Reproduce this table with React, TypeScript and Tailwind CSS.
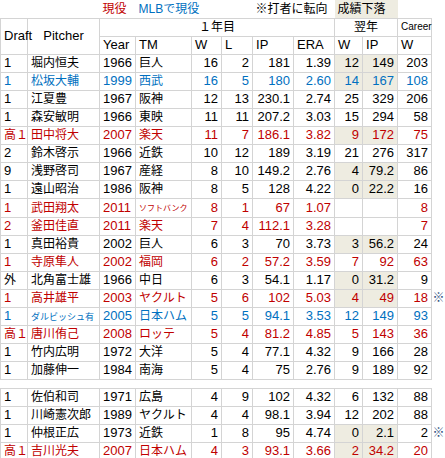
import React from 'react';

type Row = {
  d: string;
  n: string;
  y: string;
  tm: string;
  w: string;
  l: string;
  ip: string;
  era: string;
  w2: string;
  ip2: string;
  c: string;
  tone?: 'red' | 'blue';
  shade?: boolean;
  mark?: boolean;
  smallName?: boolean;
  smallTm?: boolean;
};

const top: Row[] = [
  { d: '1', n: '堀内恒夫', y: '1966', tm: '巨人', w: '16', l: '2', ip: '181', era: '1.39', w2: '12', ip2: '149', c: '203', shade: true },
  { d: '1', n: '松坂大輔', y: '1999', tm: '西武', w: '16', l: '5', ip: '180', era: '2.60', w2: '14', ip2: '167', c: '108', tone: 'blue', shade: true },
  { d: '1', n: '江夏豊', y: '1967', tm: '阪神', w: '12', l: '13', ip: '230.1', era: '2.74', w2: '25', ip2: '329', c: '206' },
  { d: '1', n: '森安敏明', y: '1966', tm: '東映', w: '11', l: '11', ip: '207.2', era: '3.03', w2: '15', ip2: '294', c: '58' },
  { d: '高１', n: '田中将大', y: '2007', tm: '楽天', w: '11', l: '7', ip: '186.1', era: '3.82', w2: '9', ip2: '172', c: '75', tone: 'red', shade: true },
  { d: '2', n: '鈴木啓示', y: '1966', tm: '近鉄', w: '10', l: '12', ip: '189', era: '3.19', w2: '21', ip2: '276', c: '317' },
  { d: '9', n: '浅野啓司', y: '1967', tm: '産経', w: '8', l: '10', ip: '149.2', era: '2.76', w2: '4', ip2: '79.2', c: '86', shade: true },
  { d: '1', n: '遠山昭治', y: '1986', tm: '阪神', w: '8', l: '5', ip: '128', era: '4.22', w2: '0', ip2: '22.2', c: '16', shade: true },
  { d: '1', n: '武田翔太', y: '2011', tm: 'ソフトバンク', w: '8', l: '1', ip: '67', era: '1.07', w2: '', ip2: '', c: '8', tone: 'red', smallTm: true },
  { d: '2', n: '釜田佳直', y: '2011', tm: '楽天', w: '7', l: '4', ip: '112.1', era: '3.28', w2: '', ip2: '', c: '7', tone: 'red' },
  { d: '1', n: '真田裕貴', y: '2002', tm: '巨人', w: '6', l: '3', ip: '70', era: '3.73', w2: '3', ip2: '56.2', c: '24', shade: true },
  { d: '1', n: '寺原隼人', y: '2002', tm: '福岡', w: '6', l: '2', ip: '57.2', era: '3.59', w2: '7', ip2: '92', c: '63', tone: 'red' },
  { d: '外', n: '北角富士雄', y: '1966', tm: '中日', w: '6', l: '3', ip: '54.1', era: '1.17', w2: '0', ip2: '31.2', c: '9', shade: true },
  { d: '1', n: '高井雄平', y: '2003', tm: 'ヤクルト', w: '5', l: '6', ip: '102', era: '5.03', w2: '4', ip2: '49', c: '18', tone: 'red', shade: true, mark: true },
  { d: '1', n: 'ダルビッシュ有', y: '2005', tm: '日本ハム', w: '5', l: '5', ip: '94.1', era: '3.53', w2: '12', ip2: '149', c: '93', tone: 'blue', smallName: true },
  { d: '高１', n: '唐川侑己', y: '2008', tm: 'ロッテ', w: '5', l: '4', ip: '81.2', era: '4.85', w2: '5', ip2: '143', c: '36', tone: 'red' },
  { d: '1', n: '竹内広明', y: '1972', tm: '大洋', w: '5', l: '4', ip: '77.1', era: '4.32', w2: '9', ip2: '166', c: '28' },
  { d: '1', n: '加藤伸一', y: '1984', tm: '南海', w: '5', l: '4', ip: '75', era: '2.76', w2: '9', ip2: '189', c: '92' },
];

const bottom: Row[] = [
  { d: '1', n: '佐伯和司', y: '1971', tm: '広島', w: '4', l: '9', ip: '102', era: '4.32', w2: '6', ip2: '132', c: '88' },
  { d: '1', n: '川崎憲次郎', y: '1989', tm: 'ヤクルト', w: '4', l: '4', ip: '98.1', era: '3.94', w2: '12', ip2: '202', c: '88' },
  { d: '1', n: '仲根正広', y: '1973', tm: '近鉄', w: '1', l: '8', ip: '95', era: '4.74', w2: '0', ip2: '2.1', c: '2', shade: true, mark: true },
  { d: '高１', n: '吉川光夫', y: '2007', tm: '日本ハム', w: '4', l: '3', ip: '93.1', era: '3.66', w2: '2', ip2: '34.2', c: '20', tone: 'red', shade: true },
];

const cell = 'border border-[#d4d4d4] h-[18px] p-0 px-[3px] whitespace-nowrap';
const num = `${cell} text-right`;
const jp = 'text-[12px]';

const Cols = () => (
  <colgroup>
    <col className="w-[27px]" />
    <col className="w-[72px]" />
    <col className="w-[36px]" />
    <col className="w-[56px]" />
    <col className="w-[30px]" />
    <col className="w-[31px]" />
    <col className="w-[41px]" />
    <col className="w-[41px]" />
    <col className="w-[28px]" />
    <col className="w-[35px]" />
    <col className="w-[34px]" />
    <col className="w-[14px]" />
  </colgroup>
);

const DataRow = ({ r }: { r: Row }) => {
  const tone = r.tone === 'red' ? 'text-[#c00000]' : r.tone === 'blue' ? 'text-[#0070c0]' : 'text-black';
  const sh = r.shade ? 'bg-[#eeece1]' : '';
  return (
    <tr className={tone}>
      <td className={cell}><span className={r.d === '1' || r.d === '2' || r.d === '9' ? '' : jp}>{r.d}</span></td>
      <td className={cell}>
        <span className={r.smallName ? 'text-[9px]' : jp}>{r.n}</span>
      </td>
      <td className={cell}>{r.y}</td>
      <td className={cell}>
        <span className={r.smallTm ? 'text-[8px]' : jp}>{r.tm}</span>
      </td>
      <td className={num}>{r.w}</td>
      <td className={num}>{r.l}</td>
      <td className={num}>{r.ip}</td>
      <td className={num}>{r.era}</td>
      <td className={`${num} ${sh}`}>{r.w2}</td>
      <td className={`${num} ${sh}`}>{r.ip2}</td>
      <td className={num}>{r.c}</td>
      <td className="p-0 text-right text-[12px] text-[#2f5080] pr-[1px]">{r.mark ? '※' : ''}</td>
    </tr>
  );
};

const App = () => {
  return (
    <div
      className="w-[445px] h-[458px] bg-white text-[13px] leading-[16px] text-black overflow-hidden"
      style={{ fontFamily: '"Liberation Sans", Arial, "Noto Sans CJK JP", sans-serif' }}
    >
      <table className="table-fixed border-collapse w-[445px]">
        <Cols />
        <tbody>
          <tr className="h-[18px]">
            <td className="p-0" colSpan={2}></td>
            <td className="p-0 px-[3px] text-[12px] text-[#c00000]">現役</td>
            <td className="p-0 px-[3px] text-[12px] text-[#0070c0] whitespace-nowrap" colSpan={3}>MLBで現役</td>
            <td className="p-0 px-[3px] text-[12px] whitespace-nowrap" colSpan={2}>※打者に転向</td>
            <td className="p-0 px-[3px] text-[12px] bg-[#eeece1] whitespace-nowrap" colSpan={2}>成績下落</td>
            <td className="p-0" colSpan={2}></td>
          </tr>
          <tr>
            <td className={`${cell} overflow-visible`} rowSpan={2}>Draft</td>
            <td className={`${cell} text-center`} rowSpan={2}>Pitcher</td>
            <td className={`${cell} text-center ${jp}`} colSpan={6}>１年目</td>
            <td className={`${cell} text-center ${jp}`} colSpan={2}>翌年</td>
            <td className={`${cell} text-center text-[10px]`}>Career</td>
            <td className="p-0"></td>
          </tr>
          <tr>
            <td className={cell}>Year</td>
            <td className={cell}>TM</td>
            <td className={cell}>W</td>
            <td className={cell}>L</td>
            <td className={cell}>IP</td>
            <td className={cell}>ERA</td>
            <td className={cell}>W</td>
            <td className={cell}>IP</td>
            <td className={cell}>W</td>
            <td className="p-0"></td>
          </tr>
          {top.map((r, i) => (
            <DataRow key={i} r={r} />
          ))}
        </tbody>
      </table>
      <table className="table-fixed border-collapse w-[445px] mt-[8px]">
        <Cols />
        <tbody>
          {bottom.map((r, i) => (
            <DataRow key={i} r={r} />
          ))}
        </tbody>
      </table>
    </div>
  );
};

export default App;
